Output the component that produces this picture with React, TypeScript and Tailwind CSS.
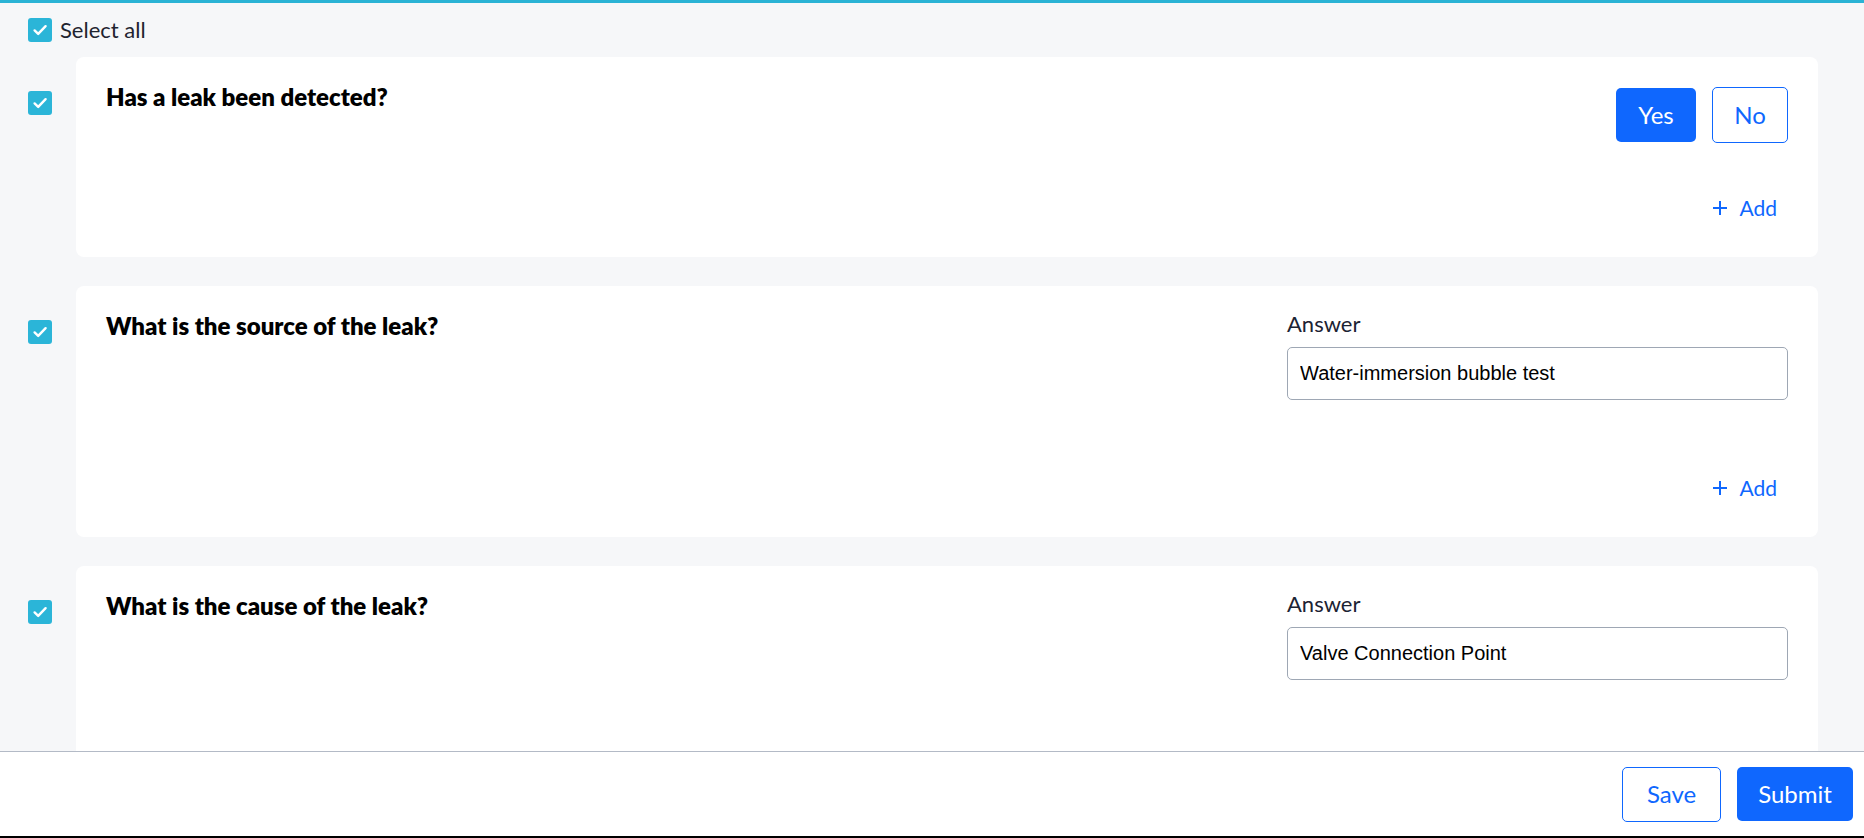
import * as React from "react";

// ============================================================================
// ICONS
// ============================================================================

const CheckMark = () => (
  <svg width="18" height="18" viewBox="0 0 18 18" fill="none" stroke="#ffffff" strokeWidth="2.4">
    <path d="M3.6 9.4l3.6 3.5L14.6 5.2" strokeLinecap="round" strokeLinejoin="round" />
  </svg>
);

const PlusIcon = () => (
  <svg width="14" height="14" viewBox="0 0 14 14" fill="none" stroke="#0f67fe" strokeWidth="2">
    <path d="M7 0v14M0 7h14" />
  </svg>
);

function Checkbox() {
  return (
    <span className="flex h-[24px] w-[24px] shrink-0 items-center justify-center rounded-[3px] bg-[#2bb5d8]">
      <CheckMark />
    </span>
  );
}

function AddButton({ className = "" }: { className?: string }) {
  return (
    <div className={`flex justify-end ${className}`}>
      <button
        type="button"
        className="flex h-[40px] items-center gap-[12px] px-[11px] text-[21px] text-[#0f67fe]"
      >
        <PlusIcon />
        <span>Add</span>
      </button>
    </div>
  );
}

// ============================================================================
// QUESTION CARDS
// ============================================================================

function QuestionRow({ children }: { children: React.ReactNode }) {
  return (
    <div className="flex items-start gap-[24px]">
      <div className="pt-[34px]">
        <Checkbox />
      </div>
      <div className="flex-1 rounded-[8px] bg-white px-[30px] pb-[29px] pt-[24px]">{children}</div>
    </div>
  );
}

function Question({ text }: { text: string }) {
  return <h3 className="text-[24px] font-extrabold leading-[32px] text-black">{text}</h3>;
}

function AnswerField({ value }: { value: string }) {
  return (
    <div className="flex w-[501px] flex-col">
      <label className="text-[22px] leading-[28px] text-[#1c2333]">Answer</label>
      <input
        readOnly
        value={value}
        className="mt-[9px] h-[53px] w-full rounded-[5px] border border-[#9ea7b4] px-[12px] text-[20px] text-black outline-none"
        style={{ fontFamily: '"Liberation Sans", Arial, sans-serif' }}
      />
    </div>
  );
}

// ============================================================================
// APP
// ============================================================================

export default function App() {
  return (
    <div
      className="flex h-screen flex-col overflow-hidden bg-[#f6f7f9]"
      style={{ fontFamily: "Lato, 'Noto Sans', sans-serif" }}
    >
      <div className="h-[3px] shrink-0 bg-[#2bb3d5]" />

      <div className="flex-1 overflow-hidden pl-[28px] pr-[46px]">
        <div className="flex items-center gap-[8px] pt-[15px]">
          <Checkbox />
          <span className="text-[22px] leading-[24px] text-[#1f2430]">Select all</span>
        </div>

        <div className="mt-[15px] flex flex-col gap-[29px]">
          <QuestionRow>
            <div className="flex items-start justify-between">
              <Question text="Has a leak been detected?" />
              <div className="mt-[7px] flex gap-[16px]">
                <button
                  type="button"
                  className="h-[54px] w-[80px] rounded-[5px] bg-[#0f67fe] text-[24px] text-white"
                >
                  Yes
                </button>
                <button
                  type="button"
                  className="-mt-px h-[56px] w-[76px] rounded-[5px] border border-[#0f67fe] bg-white text-[24px] text-[#0f67fe]"
                >
                  No
                </button>
              </div>
            </div>
            <AddButton className="mt-[45px]" />
          </QuestionRow>

          <QuestionRow>
            <div className="flex items-start justify-between">
              <Question text="What is the source of the leak?" />
              <AnswerField value="Water-immersion bubble test" />
            </div>
            <AddButton className="mt-[68px]" />
          </QuestionRow>

          <QuestionRow>
            <div className="flex min-h-[200px] items-start justify-between">
              <Question text="What is the cause of the leak?" />
              <AnswerField value="Valve Connection Point" />
            </div>
          </QuestionRow>
        </div>
      </div>

      <footer className="flex h-[87px] shrink-0 items-center justify-end gap-[16px] border-b-2 border-t border-b-black border-t-[#b3bac6] bg-white pr-[11px]">
        <button
          type="button"
          className="h-[55px] w-[99px] rounded-[5px] border border-[#0f67fe] bg-white text-[24px] text-[#0f67fe]"
        >
          Save
        </button>
        <button
          type="button"
          className="h-[54px] w-[116px] rounded-[5px] bg-[#0f67fe] text-[24px] text-white"
        >
          Submit
        </button>
      </footer>
    </div>
  );
}
